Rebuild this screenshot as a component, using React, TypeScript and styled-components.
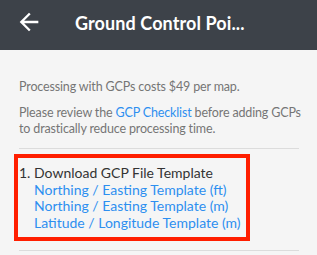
import styled, { createGlobalStyle } from "styled-components";

const GlobalStyle = createGlobalStyle`
  html, body {
    margin: 0;
    padding: 0;
    background: #f5f5f5;
    font-family: Lato, "Noto Sans", sans-serif;
  }
`;

const Page = styled.div`
  width: 317px;
  height: 255px;
  overflow: hidden;
  background: #f5f5f5;
`;

const Header = styled.div`
  display: flex;
  align-items: center;
  height: 50px;
  background: #3d4249;
  padding-left: 15px;
  box-sizing: border-box;
`;

const BackButton = styled.div`
  display: flex;
  width: 28px;
  height: 28px;
  margin-top: -6px;
  color: #ffffff;
`;

const Title = styled.div`
  margin-left: 32px;
  margin-top: -4px;
  color: #ffffff;
  font-size: 18px;
  font-weight: 700;
  letter-spacing: 0.1px;
`;

const Content = styled.div`
  padding: 29px 18px 0 19px;
`;

const Text = styled.p`
  margin: 0 0 10px;
  font-size: 12.5px;
  line-height: 16px;
  color: #757575;
  white-space: nowrap;
  letter-spacing: -0.15px;
`;

const Link = styled.a`
  color: #2d8ff0;
  text-decoration: none;
`;

const Divider = styled.div<{ $top: number }>`
  height: 1px;
  background: #dcdcdc;
  margin-top: ${(p) => p.$top}px;
`;

const Step = styled.div`
  display: flex;
  width: 236px;
  margin: 5px 0 0 -5px;
  padding: 7px 0 6px 1px;
  border: 4px solid #ff1e00;
  box-sizing: border-box;
  font-size: 14px;
  line-height: 16.5px;
  color: #333333;
  white-space: nowrap;
`;

const StepNumber = styled.span`
  width: 15px;
  flex-shrink: 0;
`;

const StepBody = styled.div`
  display: flex;
  flex-direction: column;
`;

const TemplateLink = styled.a`
  color: #2d8ff0;
  text-decoration: none;
`;

function ArrowBack() {
  return (
    <svg viewBox="0 0 24 24" width="28" height="28" fill="currentColor">
      <path d="M20 11H7.83l5.59-5.59L12 4l-8 8 8 8 1.41-1.41L7.83 13H20v-2z" />
    </svg>
  );
}

export default function App() {
  return (
    <Page>
      <GlobalStyle />
      <Header>
        <BackButton>
          <ArrowBack />
        </BackButton>
        <Title>Ground Control Poi...</Title>
      </Header>
      <Content>
        <Text>Processing with GCPs costs $49 per map.</Text>
        <Text>
          Please review the <Link>GCP Checklist</Link> before adding GCPs
          <br />
          to drastically reduce processing time.
        </Text>
        <Divider $top={11} />
        <Step>
          <StepNumber>1.</StepNumber>
          <StepBody>
            <span>Download GCP File Template</span>
            <TemplateLink>Northing / Easting Template (ft)</TemplateLink>
            <TemplateLink>Northing / Easting Template (m)</TemplateLink>
            <TemplateLink>Latitude / Longitude Template (m)</TemplateLink>
          </StepBody>
        </Step>
        <Divider $top={9} />
      </Content>
    </Page>
  );
}
